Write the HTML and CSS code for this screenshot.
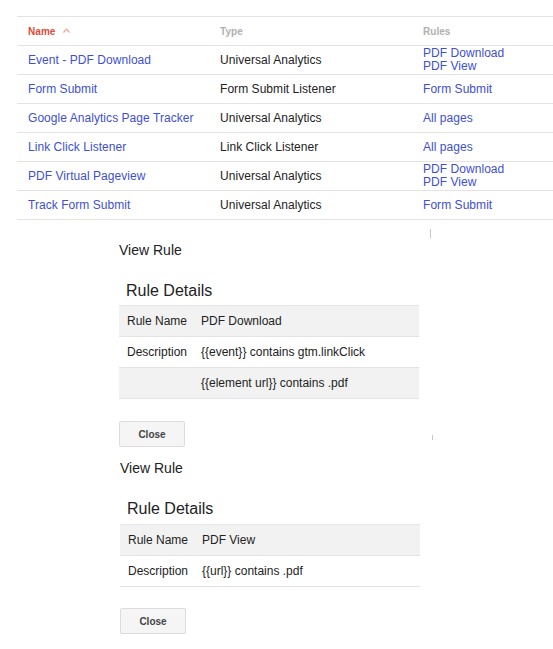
FILE: index.html
```html
<!DOCTYPE html>
<html>
<head>
<meta charset="utf-8">
<link rel="stylesheet" href="styles.css">
</head>
<body>
<div class="tags">
  <div class="row head">
    <div class="cell sorted">Name <span class="caret"><svg width="7" height="5" viewBox="0 0 7 5"><path d="M0.5 4.5 L3.5 1.2 L6.5 4.5" fill="none" stroke="#f2a08f" stroke-width="1.2"/></svg></span></div>
    <div class="cell">Type</div>
    <div class="cell">Rules</div>
  </div>
  <div class="row">
    <div class="cell"><a>Event - PDF Download</a></div>
    <div class="cell">Universal Analytics</div>
    <div class="cell multi"><a>PDF Download</a><a>PDF View</a></div>
  </div>
  <div class="row">
    <div class="cell"><a>Form Submit</a></div>
    <div class="cell">Form Submit Listener</div>
    <div class="cell"><a>Form Submit</a></div>
  </div>
  <div class="row">
    <div class="cell"><a>Google Analytics Page Tracker</a></div>
    <div class="cell">Universal Analytics</div>
    <div class="cell"><a>All pages</a></div>
  </div>
  <div class="row">
    <div class="cell"><a>Link Click Listener</a></div>
    <div class="cell">Link Click Listener</div>
    <div class="cell"><a>All pages</a></div>
  </div>
  <div class="row">
    <div class="cell"><a>PDF Virtual Pageview</a></div>
    <div class="cell">Universal Analytics</div>
    <div class="cell multi"><a>PDF Download</a><a>PDF View</a></div>
  </div>
  <div class="row">
    <div class="cell"><a>Track Form Submit</a></div>
    <div class="cell">Universal Analytics</div>
    <div class="cell"><a>Form Submit</a></div>
  </div>
</div>

<div class="dialog first">
  <span class="mark mark-a"></span>
  <div class="title">View Rule</div>
  <div class="heading">Rule Details</div>
  <div class="details">
    <div class="drow shade"><div class="label">Rule Name</div><div class="value">PDF Download</div></div>
    <div class="drow"><div class="label">Description</div><div class="value">{{event}} contains gtm.linkClick</div></div>
    <div class="drow shade"><div class="label"></div><div class="value">{{element url}} contains .pdf</div></div>
  </div>
  <button class="close">Close</button>
</div>

<div class="dialog second">
  <span class="mark mark-b"></span>
  <div class="title">View Rule</div>
  <div class="heading">Rule Details</div>
  <div class="details">
    <div class="drow shade"><div class="label">Rule Name</div><div class="value">PDF View</div></div>
    <div class="drow"><div class="label">Description</div><div class="value">{{url}} contains .pdf</div></div>
  </div>
  <button class="close">Close</button>
</div>
</body>
</html>
```

FILE: styles.css
```css
html, body {
  margin: 0;
  padding: 0;
  background: #fff;
}
body {
  font-family: "Liberation Sans", Arial, sans-serif;
  color: #222;
  font-size: 12px;
}
.tags {
  margin-left: 17px;
  padding-top: 16px;
}
.row {
  display: grid;
  grid-template-columns: 192px 203px 1fr;
  height: 28px;
  border-bottom: 1px solid #e3e3e3;
  align-items: center;
}
.row.head {
  border-top: 1px solid #e3e3e3;
  font-size: 10px;
  font-weight: bold;
  color: #b0b0b0;
}
.cell {
  padding-left: 11px;
  white-space: nowrap;
  letter-spacing: 0.05px;
}
.cell.sorted {
  color: #dd4b39;
}
.caret {
  display: inline-block;
  margin-left: 5px;
  vertical-align: 2px;
}
.caret svg { display: block; }
.cell a {
  color: #3e4fd3;
  text-decoration: none;
}
.cell.multi {
  display: flex;
  flex-direction: column;
  line-height: 13px;
}

.dialog {
  position: relative;
  margin-left: 119px;
  width: 300px;
}
.dialog.first { padding-top: 22px; }
.dialog.second { padding-top: 13px; margin-left: 120px; }
.title {
  font-size: 14px;
  line-height: 16px;
  color: #222;
}
.heading {
  font-size: 16px;
  line-height: 18px;
  padding-left: 7px;
  margin-top: 24px;
  margin-bottom: 5px;
  color: #222;
}
.second .heading { margin-bottom: 6px; }
.details {
  border-top: 1px solid #e6e6e6;
}
.drow {
  display: flex;
  align-items: center;
  height: 30px;
  border-bottom: 1px solid #e3e3e3;
}
.drow.shade { background: #f2f2f2; }
.label {
  width: 74px;
  padding-left: 8px;
  flex: none;
}
.value { white-space: nowrap; }
.close {
  display: block;
  margin-top: 22px;
  width: 66px;
  height: 26px;
  background: #f5f5f5;
  border: 1px solid #dcdcdc;
  border-radius: 2px;
  font-family: "Liberation Sans", Arial, sans-serif;
  font-size: 10px;
  font-weight: bold;
  color: #444;
  padding: 0;
}
.second .close { margin-top: 21px; }
.mark {
  position: absolute;
  width: 1px;
  background: #c8c8c8;
}
.mark-a { left: 311px; top: 9px; height: 9px; }
.mark-b { left: 312px; top: -12px; height: 5px; }
```
